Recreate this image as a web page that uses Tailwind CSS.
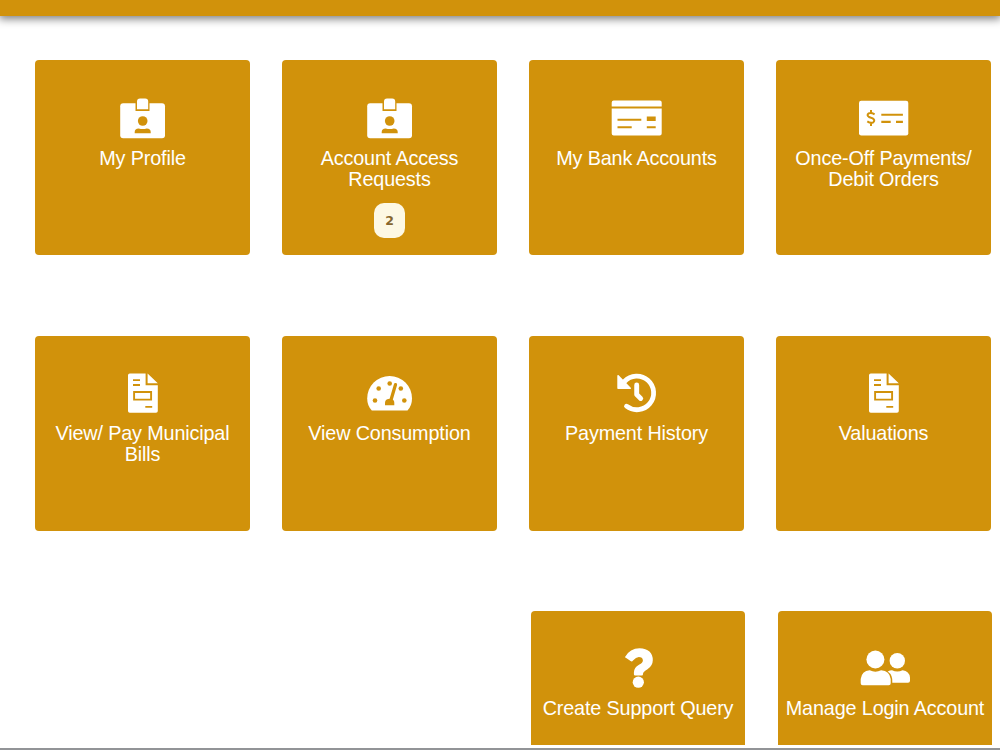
<!DOCTYPE html>
<html lang="en">
<head>
<meta charset="utf-8">
<title>Dashboard</title>
<script src="https://cdn.jsdelivr.net/npm/@tailwindcss/browser@4"></script>
</head>
<body class="bg-white">
<svg class="hidden">
  <symbol id="badge" viewBox="-30 30 60 50"><rect x="-22.3" y="42.3" width="44.8" height="35" rx="3"/><path fill="#d1920b" d="M-7 42h14v8h-14z"/><path d="M-5.5 48.2V40.5a3 3 0 0 1 3-3h5.2a3 3 0 0 1 3 3v7.7z"/><circle cx=".2" cy="60" r="4.8" fill="#d1920b"/><path fill="#d1920b" d="M-7.8 72.3v-1.2q0-3.6 4-3.6 4 1.2 8 0 4 0 4 3.6v1.2z"/></symbol>
  <symbol id="bank" viewBox="-30 30 60 50"><path d="M-24.8 45.4V41.5a2 2 0 0 1 2-2h46a2 2 0 0 1 2 2v3.9zM-24.8 47.6h50v24.9a2 2 0 0 1-2 2h-46a2 2 0 0 1-2-2z"/><path fill="#d1920b" d="M-19 57.7H4.8v2H-19zM-19 65.2h14.2v2H-19zM10.3 55.5h8.9v4.6h-8.9zM10.3 65.2h8.9v2h-8.9z"/></symbol>
  <symbol id="cheque" viewBox="-30 30 60 50"><rect x="-24.5" y="39.7" width="49.3" height="34.9" rx="2.3"/><path fill="#d1920b" d="M-2.2 52.7h21.6v2H-2.2zM-2.2 59.8h9.4v2.1h-9.4zM12.5 59.8h6.9v2.1h-6.9z"/><path d="M-8.9 53.3Q-12.4 51.2-14.8 52.4-17.2 54.2-14.5 56L-10.8 57.4Q-8 59.2-10.2 61.3-12.8 62.7-16.2 60.4M-12.5 49v3M-12.5 61.8v3.2" fill="none" stroke="#d1920b" stroke-width="2"/></symbol>
  <symbol id="doc" viewBox="-30 30 60 50"><path d="M-12.7 37.4H3.1V49.2H15.3V75a1.8 1.8 0 0 1-1.8 1.8h-26.2a1.8 1.8 0 0 1-1.8-1.8V39.2a1.8 1.8 0 0 1 1.8-1.8zM5.1 37.4L15.3 47.3H5.1z"/><path fill="#d1920b" d="M-9.5 43.2h7v1.9h-7zM-9.5 48h7v1.9h-7zM2.8 69.9h6.9v1.9H2.8z"/><path d="M-8.4 56h17v7.6h-17z" fill="none" stroke="#d1920b" stroke-width="1.9"/></symbol>
  <symbol id="gauge" viewBox="-30 30 60 50"><path d="M-17.7 74.4Q-22.3 69.5-22.3 62.4a22.4 22.4 0 0 1 44.8 0Q22.5 69.5 18 74.4z"/><g fill="#d1920b"><circle cx="-14.5" cy="64.5" r="2.3"/><circle cx="-10.8" cy="52.5" r="2.3"/><circle cx=".2" cy="47.5" r="2.3"/><circle cx="11.3" cy="52.5" r="2.3"/><circle cx="14.8" cy="64.5" r="2.3"/><path d="M-4.5 69.2v-2.4Q-4.5 62.8.8 62.8 4.8 63.2 4.8 66.8v2.4z"/></g><path d="M6 48.6L1.2 65" stroke="#d1920b" stroke-width="3.3" stroke-linecap="round"/></symbol>
  <symbol id="history" viewBox="-30 30 60 50"><path d="M-10 70.2A16.8 16.8 0 1 0-12 45.5" fill="none" stroke="#fff" stroke-width="4.8" stroke-linecap="round"/><path d="M-18.4 39.7L-6.3 52.2H-18.4z" stroke="#fff" stroke-width="1.6" stroke-linejoin="round"/><path d="M.2 49v9.4l4 4" fill="none" stroke="#fff" stroke-width="4.9" stroke-linecap="round" stroke-linejoin="round"/></symbol>
  <symbol id="question" viewBox="-30 30 60 50"><path d="M-13 46Q-8 37.3 1.5 37.3 14.8 38 14.8 49.2 14.7 54.8 9.5 58.2 5 60.7 5 62.8v.5a1.2 1.2 0 0 1-1.2 1.2h-6.6A1.3 1.3 0 0 1-4.1 63.2V61.5Q-4 56.5 1 53.8 5 51.7 4.9 49.2 4.5 46 .8 46-2 46-5 49.5-6 51-7.4 50L-12.2 46.8Q-13 46.5-13 46z"/><circle cx=".3" cy="71.2" r="5.6"/></symbol>
  <symbol id="people" viewBox="-30 30 60 50"><circle cx="-9.6" cy="48.5" r="9"/><path d="M-24.3 74.2V68q1-8 9-8.7 5.7 2.8 11.4 0 8.6.7 9.6 8.7v4.2q0 2-2 2h-26q-2 0-2-2z"/><circle cx="12.3" cy="49.8" r="7.7"/><path d="M2.7 60.5Q5 59.3 7 59.3q5.3 2.4 10.6 0 6.6.7 7.4 7.2v3.3q0 2-2 2H7.3Q8 64 2.7 60.5z"/></symbol>
</svg>
<div class="flex h-[750px] w-[1000px] flex-col overflow-hidden bg-white font-['Liberation_Sans',Arial,sans-serif] text-[19.8px] leading-[21px] tracking-[-0.14px] text-white">
  <header class="h-4 shrink-0 bg-[#d1920b] shadow-[0_2px_8px_1px_rgba(0,0,0,0.5)]"></header>
  <main class="flex h-[729px] shrink-0 flex-col gap-[80.4px] overflow-hidden pt-[44.4px] pl-[35px]">
    <section class="flex shrink-0 gap-[32px]">
      <article class="flex h-[195px] w-[215px] shrink-0 flex-col items-center rounded bg-[#d1920b] pt-[30.6px] text-center"><svg class="h-[50px] w-[61px] shrink-0" fill="#fff"><use href="#badge"/></svg><h2 class="mt-[7px] whitespace-nowrap">My Profile</h2></article>
      <article class="flex h-[195px] w-[215px] shrink-0 flex-col items-center rounded bg-[#d1920b] pt-[30.6px] text-center"><svg class="h-[50px] w-[61px] shrink-0" fill="#fff"><use href="#badge"/></svg><h2 class="mt-[7px] whitespace-nowrap">Account Access<br>Requests</h2><span class="mt-[13px] flex h-[35px] w-[31px] items-center justify-center rounded-[10px] bg-[#fdf8e4] font-['DejaVu_Sans',sans-serif] text-[12.5px] font-bold text-[#86662f]">2</span></article>
      <article class="flex h-[195px] w-[215px] shrink-0 flex-col items-center rounded bg-[#d1920b] pt-[30.6px] text-center"><svg class="h-[50px] w-[61px] shrink-0" fill="#fff"><use href="#bank"/></svg><h2 class="mt-[7px] whitespace-nowrap">My Bank Accounts</h2></article>
      <article class="flex h-[195px] w-[215px] shrink-0 flex-col items-center rounded bg-[#d1920b] pt-[30.6px] text-center"><svg class="h-[50px] w-[61px] shrink-0" fill="#fff"><use href="#cheque"/></svg><h2 class="mt-[7px] whitespace-nowrap">Once-Off Payments/<br>Debit Orders</h2></article>
    </section>
    <section class="flex shrink-0 gap-[32px]">
      <article class="flex h-[195px] w-[215px] shrink-0 flex-col items-center rounded bg-[#d1920b] pt-[30px] text-center"><svg class="h-[50px] w-[61px] shrink-0" fill="#fff"><use href="#doc"/></svg><h2 class="mt-[7px] whitespace-nowrap">View/ Pay Municipal<br>Bills</h2></article>
      <article class="flex h-[195px] w-[215px] shrink-0 flex-col items-center rounded bg-[#d1920b] pt-[30px] text-center"><svg class="h-[50px] w-[61px] shrink-0" fill="#fff"><use href="#gauge"/></svg><h2 class="mt-[7px] whitespace-nowrap">View Consumption</h2></article>
      <article class="flex h-[195px] w-[215px] shrink-0 flex-col items-center rounded bg-[#d1920b] pt-[30px] text-center"><svg class="h-[50px] w-[61px] shrink-0" fill="#fff"><use href="#history"/></svg><h2 class="mt-[7px] whitespace-nowrap">Payment History</h2></article>
      <article class="flex h-[195px] w-[215px] shrink-0 flex-col items-center rounded bg-[#d1920b] pt-[30px] text-center"><svg class="h-[50px] w-[61px] shrink-0" fill="#fff"><use href="#doc"/></svg><h2 class="mt-[7px] whitespace-nowrap">Valuations</h2></article>
    </section>
    <section class="flex shrink-0 gap-[33px] pl-[496px]">
      <article class="flex h-[195px] w-[214px] shrink-0 flex-col items-center rounded bg-[#d1920b] pt-[30px] text-center"><svg class="h-[50px] w-[60px] shrink-0" fill="#fff"><use href="#question"/></svg><h2 class="mt-[7px] whitespace-nowrap">Create Support Query</h2></article>
      <article class="flex h-[195px] w-[214px] shrink-0 flex-col items-center rounded bg-[#d1920b] pt-[30px] text-center"><svg class="h-[50px] w-[60px] shrink-0" fill="#fff"><use href="#people"/></svg><h2 class="mt-[7px] whitespace-nowrap">Manage Login Account</h2></article>
    </section>
  </main>
  <footer class="mt-[3px] h-0.5 shrink-0 bg-[#929497]"></footer>
</div>
</body>
</html>
